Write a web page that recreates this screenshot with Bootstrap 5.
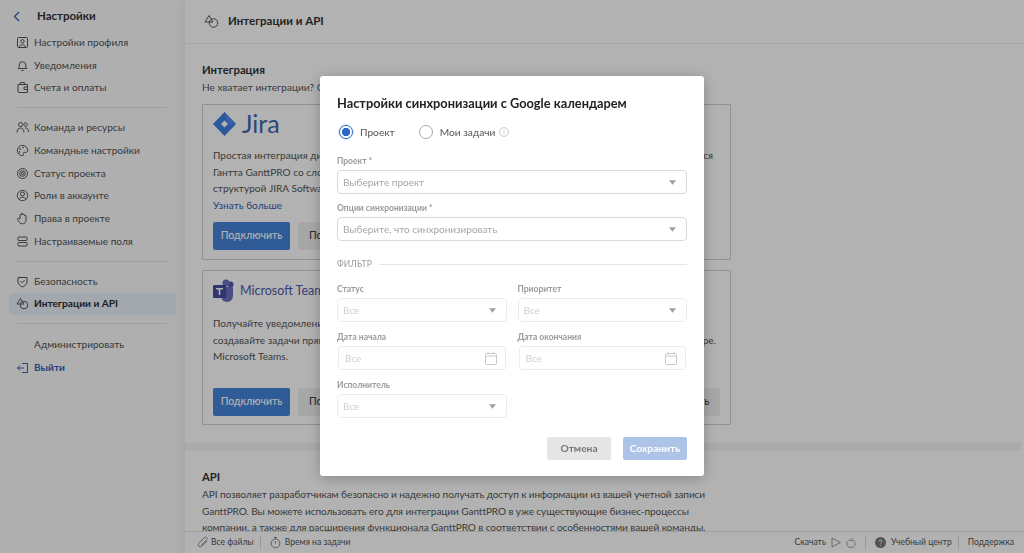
<!DOCTYPE html>
<html lang="ru">
<head>
<meta charset="utf-8">
<title>Интеграции и API</title>
<link href="https://cdn.jsdelivr.net/npm/bootstrap@5.3.0/dist/css/bootstrap.min.css" rel="stylesheet">
<style>
html,body{height:100%;overflow:hidden}
body{font-family:"Lato","Open Sans","Liberation Sans",sans-serif;font-size:10.1px;line-height:16.8px;color:#555;background:#fff}
.shell{display:flex;height:553px;overflow:hidden}
.side{width:185px;flex:none;background:#fbfbfb;padding:7px 9px 0}
.side-title{display:flex;align-items:center;height:19px;padding-left:4px;margin-bottom:5px;font-size:11.5px;font-weight:700;color:#333}
.side-title svg{margin-right:17px}
.side-link{display:flex;align-items:center;height:22.75px;padding-left:7px;color:#525252;text-decoration:none;border-radius:3px;white-space:nowrap}
.side-link svg{width:13px;height:13px;margin-right:5px;flex:none;color:#555}
.side-link.on{background:#e9f1f8;font-weight:700;color:#2a2a2a}
.side-link.out{color:#3561ad;font-weight:700}
.side-link.out svg{color:#3561ad}
.indent{margin-left:18px}
.side-rule{height:1px;background:#e3e3e3;margin:8px 9px 8px 8px}
.side-rule.wide{margin-bottom:9px}
.mainp{flex:1;min-width:0;display:flex;flex-direction:column;box-shadow:-4px 0 12px rgba(0,0,0,.06);position:relative}
.head{height:44px;flex:none;display:flex;align-items:center;padding-left:19px;border-bottom:1px solid #f0f0f0;font-size:11.5px;font-weight:700;color:#333}
.head svg{margin-right:9px}
.scrollp{flex:1;min-height:0;overflow:hidden}
.sect{padding:17px 293px 0 17px}
.sect-title{font-size:11.3px;font-weight:700;color:#333;line-height:18px}
.sect-band{height:8px;background:#f4f4f4;margin:18px 3px 17px 0}
.sect-api{padding:0 300px 0 17px;letter-spacing:-.1px;white-space:nowrap}
.lnk{color:#3561ad;text-decoration:none}
.int-card{border:1px solid #d0d0d0;border-radius:1px;padding:0 10px;margin-top:8px;white-space:nowrap;overflow:hidden}
.int-card.c1{height:156px}
.int-card.c2{height:155px;margin-top:10px}
.jira{display:flex;align-items:center;height:37px;padding-top:1px;font-size:25px;font-weight:400;color:#4068b0;line-height:1}
.jira svg{margin-right:6px}
.teams{display:flex;align-items:center;height:39px;margin-top:1px;font-size:12.5px;color:#5059a8}
.teams svg{margin-right:3px}
.txt1{margin-top:5px}
.txt2{margin-top:4px}
.acts1{margin-top:8px}
.acts2{margin-top:23px}
.btn-blue,.btn-grey{height:28px;padding:0 6px;font-size:10.5px;border-radius:2px;border:0;font-weight:500}
.btn-blue{width:77px;background:#4484d8;color:#fff}
.btn-grey{background:#f0f0f0;color:#444;width:77px}
.foot{height:22px;flex:none;display:flex;align-items:center;border-top:1px solid #e4e4e4;background:#fff;padding:0 10px 0 11px;font-size:8.6px;color:#555;white-space:nowrap}
.foot svg{flex:none}
.foot-sep{width:1px;height:13px;background:#d8d8d8;margin:0 9px 0 6px}
.foot-sep.b{margin-left:9px}
.ft1{margin-left:2px}
.ft2{margin-left:5px}
.ft3{margin-left:4px}
.shade{--bs-backdrop-opacity:.3;--bs-backdrop-bg:#000}
.dlg{--bs-modal-width:384px;--bs-modal-margin:76px;margin-top:76px;margin-bottom:0}
.dlg .modal-content{height:400px;border:0;border-radius:3px;padding:18px 17px 0 17px;box-shadow:0 2px 14px rgba(0,0,0,.25)}
.dlg-title{font-size:12.8px;font-weight:700;color:#222;line-height:18px;margin:0}
.rad-row{display:flex;align-items:center;height:20px;margin:10px 0 0 2px;color:#555;font-size:10.2px}
.rad{appearance:none;width:14px;height:14px;border-radius:50%;border:1px solid #a8a8a8;background:#fff;margin:0 7px 0 0;flex:none}
.rad.sel{border:1.5px solid #2f67c4;background:radial-gradient(circle,#2f67c4 0 4px,#fff 4.4px);box-shadow:0 0 0 1px #dbe6f6}
.fld-lab{display:block;font-size:8.5px;line-height:11px;font-weight:700;color:#9a9a9a;margin:0 0 3px}
.fld{height:24px;padding:0 24px 0 5px;font-size:10px;line-height:22px;color:#a6a6a6;border:1px solid #d9d9d9;border-radius:4px;box-shadow:none;background-position:right 10px center;background-size:7px 4.5px;background-image:url("data:image/svg+xml,%3Csvg xmlns='http://www.w3.org/2000/svg' viewBox='0 0 10 6'%3E%3Cpath d='M0 0h10L5 6z' fill='%23a0a0a0'/%3E%3C/svg%3E")}
.fld.dim{color:#cfcfcf;border-color:#ececec;background-color:#fff}
.gap1{margin-top:14px}
.gap2{margin-top:9px}
.filt{display:flex;align-items:center;margin-top:17px;height:12px;font-size:8.5px;color:#9a9a9a;letter-spacing:.2px}
.filt::after{content:"";flex:1;height:1px;background:#e6e6e6;margin-left:7px}
.two{display:grid;grid-template-columns:169.5px 169.5px;column-gap:11px;margin-top:14px}
.two>div{height:48px}
.date{display:flex;align-items:center;justify-content:space-between;height:24px;border:1px solid #ececec;border-radius:3px;padding:0 8px 0 6px;margin:0 1px;font-size:10px;color:#cfcfcf}
.acts{display:flex;justify-content:flex-end;gap:12px;margin-top:9px}
.b-cancel,.b-save{height:23px;padding:0;font-size:10.2px;border:0;border-radius:2px;font-weight:700}
.b-cancel{width:64px;background:#e5e5e5;color:#777}
.b-save{width:64px;background:#adc3e8;color:#fff;opacity:1}
</style>
</head>
<body>
<div class="shell">
  <aside class="side">
    <div class="side-title">
      <svg width="7" height="11" viewBox="0 0 7 11" fill="none" stroke="#3561ad" stroke-width="1.3"><path d="M6 1 1.5 5.5 6 10"/></svg>Настройки
    </div>
    <a class="side-link" href="#"><svg viewBox="0 0 13 13" fill="none" stroke="currentColor"><rect x="1.5" y="1.5" width="10" height="10" rx="1"/><circle cx="6.5" cy="5.3" r="1.7"/><path d="M3.5 11c0-3 6-3 6 0"/></svg><span>Настройки профиля</span></a>
    <a class="side-link" href="#"><svg viewBox="0 0 13 13" fill="none" stroke="currentColor"><path d="M2.2 9.5c1-1 1-2 1-3.500a3.300 3.300 0 0 1 6.600 0c0 1.500 0 2.500 1 3.500z"/><path d="M5.300 11.500h2.400"/></svg><span>Уведомления</span></a>
    <a class="side-link" href="#"><svg viewBox="0 0 13 13" fill="none" stroke="currentColor"><path d="M2 3.500h9.500v8H3a1 1 0 0 1-1-1zM4 3.500l.5-2h4l.5 2"/><path d="M11.500 6H8v2.500h3.500"/></svg><span>Счета и оплаты</span></a>
    <div class="side-rule"></div>
    <a class="side-link" href="#"><svg viewBox="0 0 13 13" fill="none" stroke="currentColor"><circle cx="4.500" cy="3.500" r="2"/><circle cx="9.500" cy="3.500" r="1.700"/><path d="M1 11.500c0-6 7-6 7 0M9 7c2-.5 3.500 1 3.500 4"/></svg><span>Команда и ресурсы</span></a>
    <a class="side-link" href="#"><svg viewBox="0 0 13 13" fill="none" stroke="currentColor"><path d="M6.500 1.300a5.200 5.200 0 1 0 0 10.400c1.500 0 1.200-1.200.8-1.800-.4-.8.200-1.500 1.200-1.500h1.500c1.200 0 1.700-1 1.700-2 0-3-2.500-5.100-5.200-5.100z"/><circle cx="4" cy="5" r=".5"/><circle cx="7" cy="3.500" r=".5"/><circle cx="3.500" cy="8" r=".5"/></svg><span>Командные настройки</span></a>
    <a class="side-link" href="#"><svg viewBox="0 0 13 13" fill="none" stroke="currentColor"><circle cx="6.500" cy="6.500" r="5"/><circle cx="6.500" cy="6.500" r="2.800"/><circle cx="6.500" cy="6.500" r="1.200"/></svg><span>Статус проекта</span></a>
    <a class="side-link" href="#"><svg viewBox="0 0 13 13" fill="none" stroke="currentColor"><circle cx="6.500" cy="6.500" r="5.200"/><circle cx="6.500" cy="5" r="2"/><path d="M3 10.500c1-3 6-3 7 0"/></svg><span>Роли в аккаунте</span></a>
    <a class="side-link" href="#"><svg viewBox="0 0 13 13" fill="none" stroke="currentColor"><path d="M4 7V3a.8.800 0 0 1 1.500 0V1.800a.8.800 0 0 1 1.500 0V3a.8.800 0 0 1 1.500 0v1a.8.800 0 0 1 1.500 0v4c0 2.500-1.500 3.800-3.500 3.800-2.500 0-3-1.300-5-4.300-.5-1 .8-1.600 1.500-.8z"/></svg><span>Права в проекте</span></a>
    <a class="side-link" href="#"><svg viewBox="0 0 13 13" fill="none" stroke="currentColor"><rect x="2" y="2" width="9" height="3.500" rx=".6"/><rect x="2" y="7.500" width="9" height="3.500" rx=".6"/></svg><span>Настраиваемые поля</span></a>
    <div class="side-rule"></div>
    <a class="side-link" href="#"><svg viewBox="0 0 13 13" fill="none" stroke="currentColor"><path d="M2 2.500h9v4.500c0 2.500-2.500 4-4.500 5C4.500 11 2 9.500 2 7z"/><path d="M4.500 6.300l1.500 1.500 2.700-2.700"/></svg><span>Безопасность</span></a>
    <a class="side-link on" href="#"><svg viewBox="0 0 13 13" fill="none" stroke="currentColor"><path d="M4.500 1.500 8 7H1z"/><circle cx="8" cy="8" r="3.800"/></svg><span>Интеграции и API</span></a>
    <div class="side-rule wide"></div>
    <a class="side-link" href="#"><span class="indent">Администрировать</span></a>
    <a class="side-link out" href="#"><svg viewBox="0 0 13 13" fill="none" stroke="currentColor"><path d="M6 2.500h5.500v9H6M8 7H1.500M4 4.500 1.500 7 4 9.500"/></svg><span>Выйти</span></a>
  </aside>
  <main class="mainp">
    <header class="head">
      <svg width="15" height="15" viewBox="0 0 15 15" fill="none" stroke="#555"><path d="M5 1.500 9 8H1z"/><circle cx="9.500" cy="9" r="4.300"/></svg>Интеграции и API
    </header>
    <div class="scrollp">
      <section class="sect">
        <div class="sect-title">Интеграция</div>
        <div>Не хватает интеграции? <a class="lnk" href="#">Сообщите нам</a></div>
        <div class="int-card c1">
          <div class="jira"><svg width="23" height="24" viewBox="0 0 23 24"><path d="M11.500 0 23 12 11.500 24 0 12z" fill="#3f7fe0"/><path d="M11.500 8.500 15 12l-3.500 3.500L8 12z" fill="#fff"/><path d="M11.500 0 23 12h-8z" fill="#4f8cea"/></svg>Jira</div>
          <div class="txt1">Простая интеграция диаграмм Ганта GanttPRO с проектами позволяет вам работать и синхронизироваться<br>Гантта GanttPRO со сложной структурой проекта JIRA Software<br>структурой JIRA Software<br><a class="lnk" href="#">Узнать больше</a></div>
          <div class="d-flex gap-2 acts1"><button class="btn btn-blue" type="button">Подключить</button><button class="btn btn-grey" type="button">Подробнее</button></div>
        </div>
        <div class="int-card c2">
          <div class="teams"><svg width="24" height="24" viewBox="0 0 24 24"><circle cx="17.500" cy="5.500" r="3" fill="#5059a8"/><circle cx="13" cy="4" r="3.500" fill="#6a6fbc"/><path d="M8 8h11a1 1 0 0 1 1 1v8a6 6 0 0 1-12 0z" fill="#6a6fbc"/><rect x="0" y="6" width="13" height="13" rx="1" fill="#454c9c"/><path d="M3 9h7v1.500H7.300V16H5.700v-5.500H3z" fill="#fff"/></svg>Microsoft Teams</div>
          <div class="txt2">Получайте уведомления о задачах в ваших проектах GanttPRO прямо в рабочем чате вашей команды<br>создавайте задачи прямо из сообщений в чате, не теряя контекст обсуждения в вашем текущем разговоре.<br>Microsoft Teams.</div>
          <div class="d-flex justify-content-between acts2"><div class="d-flex gap-2"><button class="btn btn-blue" type="button">Подключить</button><button class="btn btn-grey" type="button">Подробнее</button></div><button class="btn btn-grey" type="button">Отключить</button></div>
        </div>
      </section>
      <div class="sect-band"></div>
      <section class="sect-api">
        <div class="sect-title">API</div>
        <div>API позволяет разработчикам безопасно и надежно получать доступ к информации из вашей учетной записи<br>GanttPRO. Вы можете использовать его для интеграции GanttPRO в уже существующие бизнес-процессы<br>компании, а также для расширения функционала GanttPRO в соответствии с особенностями вашей команды.</div>
      </section>
    </div>
    <footer class="foot">
      <svg width="13" height="13" viewBox="0 0 13 13" fill="none" stroke="#8a8a8a"><path d="M11 5 5.500 10.500a2.200 2.200 0 0 1-3-3L8.500 1.500a1.500 1.500 0 0 1 2.200 2.200L5 9.300"/></svg>
      <span class="ft1">Все файлы</span><span class="foot-sep"></span>
      <svg width="11" height="13" viewBox="0 0 12 13" fill="none" stroke="#7a7a7a"><circle cx="6" cy="7.500" r="4.800"/><path d="M4.500 1h3M6 1v1.500M6 5v2.500"/></svg>
      <span class="ft3">Время на задачи</span>
      <span class="ms-auto">Скачать</span>
      <svg class="ft2" width="10" height="11" viewBox="0 0 10 11" fill="none" stroke="#9a9a9a"><path d="M1 1 9.500 5.500 1 10z"/></svg>
      <svg class="ft2" width="10" height="12" viewBox="0 0 11 12" fill="none" stroke="#9a9a9a"><path d="M5.500 3.500C3 2 1 4 1 6.500 1 9 3 11.500 5.500 10.800 8 11.500 10 9 10 6.500 10 4 8 2 5.500 3.500zM5.500 3.500C5.500 2 6.500 1 7.500 1"/></svg>
      <span class="foot-sep b"></span>
      <svg width="11" height="11" viewBox="0 0 11 11"><circle cx="5.500" cy="5.500" r="5.500" fill="#777"/><path d="M4 4.300c.1-1.600 3-1.600 3 .1 0 1-1.500 1-1.500 2.100" fill="none" stroke="#fff"/><circle cx="5.500" cy="8.300" r=".6" fill="#fff"/></svg>
      <span class="ft2">Учебный центр</span><span class="foot-sep"></span>
      <span>Поддержка</span>
    </footer>
  </main>
</div>

<div class="modal-backdrop show shade"></div>
<div class="modal d-block" tabindex="-1" role="dialog" aria-modal="true">
  <div class="modal-dialog dlg">
    <div class="modal-content">
      <h5 class="dlg-title">Настройки синхронизации с Google календарем</h5>
      <div class="rad-row">
        <input class="rad sel" type="radio" name="scope" checked aria-label="Проект"><span>Проект</span>
        <input class="rad ms-4" type="radio" name="scope" aria-label="Мои задачи"><span>Мои задачи</span>
        <svg class="ms-1" width="10" height="10" viewBox="0 0 10 10" fill="none" stroke="#bbb" stroke-width=".8"><circle cx="5" cy="5" r="4.400"/><path d="M5 4.300V7.500M5 2.400v1"/></svg>
      </div>
      <div class="gap1"><label class="fld-lab">Проект *</label><select class="form-select fld"><option>Выберите проект</option></select></div>
      <div class="gap2"><label class="fld-lab">Опции синхронизации *</label><select class="form-select fld"><option>Выберите, что синхронизировать</option></select></div>
      <div class="filt">ФИЛЬТР</div>
      <div class="two">
        <div><label class="fld-lab">Статус</label><select class="form-select fld dim"><option>Все</option></select></div>
        <div><label class="fld-lab">Приоритет</label><select class="form-select fld dim"><option>Все</option></select></div>
        <div><label class="fld-lab">Дата начала</label><div class="date">Все<svg width="12" height="13" viewBox="0 0 12 13" fill="none" stroke="#c8c8c8"><rect x=".5" y="1.500" width="11" height="11" rx="1"/><path d="M.5 4h11M3 0v2M9 0v2"/></svg></div></div>
        <div><label class="fld-lab">Дата окончания</label><div class="date">Все<svg width="12" height="13" viewBox="0 0 12 13" fill="none" stroke="#c8c8c8"><rect x=".5" y="1.500" width="11" height="11" rx="1"/><path d="M.5 4h11M3 0v2M9 0v2"/></svg></div></div>
        <div><label class="fld-lab">Исполнитель</label><select class="form-select fld dim"><option>Все</option></select></div>
      </div>
      <div class="acts"><button class="btn b-cancel" type="button">Отмена</button><button class="btn b-save" type="button">Сохранить</button></div>
    </div>
  </div>
</div>
<script src="https://cdn.jsdelivr.net/npm/bootstrap@5.3.0/dist/js/bootstrap.bundle.min.js"></script>
</body>
</html>
